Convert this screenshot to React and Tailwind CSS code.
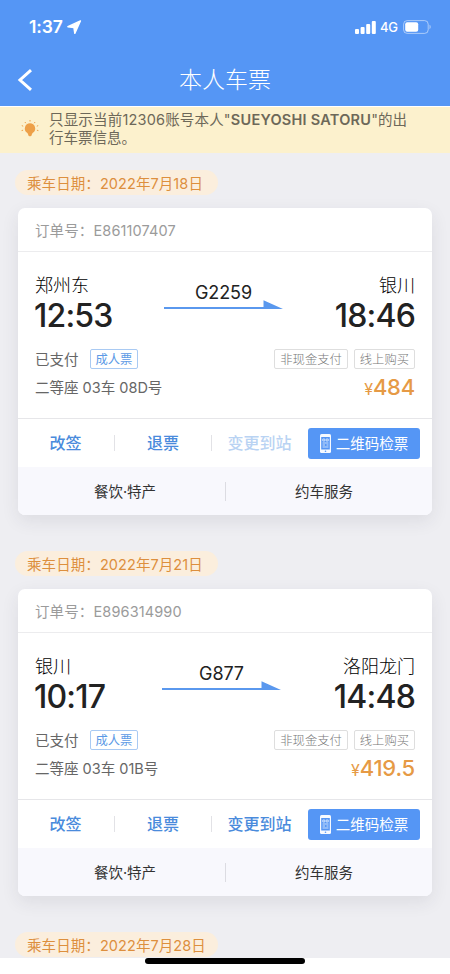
import React from 'react';
import clsx from 'clsx';

const tickets = [
  {
    date: '2022年7月18日',
    order: 'E861107407',
    from: '郑州东',
    depart: '12:53',
    to: '银川',
    arrive: '18:46',
    train: 'G2259',
    seat: '二等座 03车 08D号',
    price: '484',
    canChangeStation: false,
    arrowMargin: 'ml-[146px]',
  },
  {
    date: '2022年7月21日',
    order: 'E896314990',
    from: '银川',
    depart: '10:17',
    to: '洛阳龙门',
    arrive: '14:48',
    train: 'G877',
    seat: '二等座 03车 01B号',
    price: '419.5',
    canChangeStation: true,
    arrowMargin: 'ml-[144px]',
  },
];

function StatusBar() {
  return (
    <div className="flex h-[54px] items-center justify-between pl-[29px] pr-[18px]">
      <div className="flex items-center gap-1">
        <span className="w-[34px] whitespace-nowrap text-[17.5px] font-semibold leading-5 tracking-[-0.1px]">1:37</span>
        <svg width="15" height="14" viewBox="0 0 15 14" fill="currentColor">
          <path d="M13.4.9.9 6.700l6 .8.9 5.900z" stroke="currentColor" strokeWidth="1.4" strokeLinejoin="round" />
        </svg>
      </div>
      <div className="flex items-center">
        <svg width="21" height="13" viewBox="0 0 21 13" fill="currentColor">
          <rect x="0" y="8" width="4" height="5" rx="1" />
          <rect x="5.6" y="6" width="4" height="7" rx="1" />
          <rect x="11.2" y="3" width="4" height="10" rx="1" />
          <rect x="16.8" y="0" width="4" height="13" rx="1" />
        </svg>
        <span className="ml-1 w-[18px] text-[13px] font-medium leading-5 tracking-[-0.2px]">4G</span>
        <svg className="ml-[5px]" width="29" height="14" viewBox="0 0 29 14" fill="none">
          <rect x=".6" y=".6" width="24.6" height="12.8" rx="3.6" stroke="#fff" strokeOpacity=".5" />
          <rect x="2.2" y="2.2" width="13" height="9.6" rx="2" fill="#fff" />
          <path d="M26.5 4.8c1.6.5 1.6 3.9 0 4.4z" fill="#fff" fillOpacity=".5" />
        </svg>
      </div>
    </div>
  );
}

function Header() {
  return (
    <header className="h-[106px] shrink-0 bg-[#5596f5] text-white">
      <StatusBar />
      <div className="grid h-[51px] grid-cols-[80px_1fr_80px] items-center">
        <svg className="ml-[17px]" width="16" height="22" viewBox="0 0 16 22" fill="none" stroke="currentColor" strokeWidth="3">
          <path d="M14 1.2 3 11l11 9.8" />
        </svg>
        <h1 className="text-center text-[23px] font-light leading-8">本人车票</h1>
      </div>
    </header>
  );
}

function Notice() {
  return (
    <div className="flex h-[47px] shrink-0 border-t border-white bg-[#fcf1cd] pl-[21px] text-[#6d6859]">
      <svg className="mt-[13px] shrink-0" width="18" height="18" viewBox="0 0 18 18" fill="#eda048">
        <path d="M9 3.3a5.2 5.2 0 0 0-2.9 9.500c.8.700 1 1.600 1.300 2.600.4 1.100 2.800 1.100 3.200 0 .3-1 .5-1.900 1.300-2.600A5.200 5.200 0 0 0 9 3.300z" />
        <path d="M9 0v1.500M3.900 2l.9 1.200M14.100 2l-.9 1.200M.8 5.600l1.400.6M17.200 5.600l-1.400.6M.6 10.600l1.500-.4M17.400 10.600l-1.500-.4" stroke="#eda048" strokeWidth="1" />
      </svg>
      <p className="ml-[10px] mt-[4px] whitespace-nowrap text-[14.5px] leading-[18px]">
        <span className="tracking-[0.18px]">只显示当前12306账号本人"</span>
        <b className="font-semibold tracking-[0.25px]">SUEYOSHI SATORU</b>"的出
        <br />
        行车票信息。
      </p>
    </div>
  );
}

function DatePill({ date, className }) {
  return (
    <div className={clsx('flex h-[25px] w-[203px] items-center rounded-full bg-[#fbeedd] pl-3 pt-0.5 text-[14.5px] leading-5 text-[#dd8f3d]', className)}>
      <span className="whitespace-nowrap tracking-[0.08px]">乘车日期：{date}</span>
    </div>
  );
}

function Tag({ children, blue }) {
  return (
    <span
      className={clsx(
        'flex h-5 items-center whitespace-nowrap rounded-[2px] border px-[5px] pt-px text-[12.3px] leading-4',
        blue ? 'border-[#a9caf3] text-[#5c9ae6]' : 'border-[#dedede] font-light text-[#777]'
      )}
    >
      {children}
    </span>
  );
}

function PhoneIcon() {
  return (
    <svg width="11" height="19" viewBox="0 0 11 19" fill="none">
      <rect width="11" height="19" rx="1.5" fill="#fff" fillOpacity=".95" />
      <rect x="1.2" y="3" width="8.6" height="12.5" fill="#5596f5" />
      <path d="M2.8 5h2v2h-2zM6.2 5h2v2h-2zM2.5 9h6M2.5 11h2.500M6.500 11h2M2.500 13h6" stroke="#d9e8fd" strokeWidth=".9" />
      <circle cx="5.5" cy="17.2" r=".8" fill="#5596f5" />
    </svg>
  );
}

function TicketCard({ ticket }) {
  return (
    <section className="mx-[18px] overflow-hidden rounded-[7px] bg-white shadow-[0_6px_18px_rgba(40,40,70,0.09)]">
      <div className="flex h-[44px] items-center border-b border-[#ececee] pl-[17px] pt-0.5 text-[14.5px] leading-5 tracking-[0.12px] text-[#9b9b9b]">
        订单号：{ticket.order}
      </div>

      <div className="relative h-[167px] border-b border-[#e6e6e9] px-[17px] pt-[22px] text-[#222]">
        <div className="flex justify-between text-[18px] font-light leading-6 text-black">
          <span>{ticket.from}</span>
          <span>{ticket.to}</span>
        </div>
        <div className="flex h-9 justify-between text-[32px] font-medium leading-[35px] tracking-[-0.8px]">
          <span className="-ml-px">{ticket.depart}</span>
          <span>{ticket.arrive}</span>
        </div>

        {/* train number over the arrow */}
        <div className={clsx('absolute left-0 top-[28px] w-[119px]', ticket.arrowMargin)}>
          <div className="h-6 pt-px text-center text-[18px] leading-6 tracking-[-0.1px]">{ticket.train}</div>
          <svg className="-mt-[4px] block" width="119" height="9" viewBox="0 0 119 9" fill="#5a98ee">
            <path d="M0 7h99.5V.3L119 8.900H0z" />
          </svg>
        </div>

        <div className="mt-[15px] flex h-5 items-center text-[14.5px] leading-5 text-[#666]">
          <span className="mr-[11px] pt-0.5">已支付</span>
          <Tag blue>成人票</Tag>
          <div className="ml-auto flex gap-[6px]">
            <Tag>非现金支付</Tag>
            <Tag>线上购买</Tag>
          </div>
        </div>
        <div className="mt-[5px] flex h-7 items-center justify-between text-[14.5px] leading-5 text-[#666]">
          <span>{ticket.seat}</span>
          <span className="text-[22px] font-medium leading-7 tracking-[-0.2px] text-[#e69a45]">
            <span className="text-[16px] font-normal">¥</span>
            {ticket.price}
          </span>
        </div>
      </div>

      <div className="flex h-[48px] items-center text-[16px] font-medium leading-6 text-[#4a8bdc]">
        <button className="w-[97px] border-r border-[#e2e2e6] pr-px leading-4">改签</button>
        <button className="w-[97px] border-r border-[#e2e2e6] leading-4">退票</button>
        <button className={clsx('w-[96px] whitespace-nowrap pr-px leading-4', !ticket.canChangeStation && 'text-[#b9d3f3]')}>
          变更到站
        </button>
        <button className="mt-px flex h-[31px] w-[112px] items-center justify-center gap-[5px] whitespace-nowrap rounded-[3px] bg-[#5596f5] text-[14.5px] font-normal text-white">
          <PhoneIcon />
          <span>二维码检票</span>
        </button>
      </div>

      <div className="flex h-[48px] items-center bg-[#f8f8fd] text-center text-[14.5px] leading-[18px] text-[#333]">
        <button className="w-[208px] border-r border-[#dcdce2] pl-[7px] pt-px">餐饮·特产</button>
        <button className="flex-1 pr-[10px] pt-px">约车服务</button>
      </div>
    </section>
  );
}

export default function App() {
  return (
    <div className="flex h-[974px] w-[450px] flex-col overflow-hidden bg-white font-['Inter','Noto_Sans_CJK_SC',sans-serif]">
      <Header />
      <Notice />
      <main className="h-[805px] shrink-0 overflow-hidden bg-[#eeeef2] pt-[17px]">
        {tickets.map((ticket) => (
          <div key={ticket.order} className="mb-9">
            <DatePill date={ticket.date} className="mb-[13px] ml-[15px]" />
            <TicketCard ticket={ticket} />
          </div>
        ))}
        <DatePill date="2022年7月28日" className="ml-[15px]" />
      </main>
      <div className="mx-auto h-[6px] w-[160px] shrink-0 rounded-full bg-black" />
    </div>
  );
}
